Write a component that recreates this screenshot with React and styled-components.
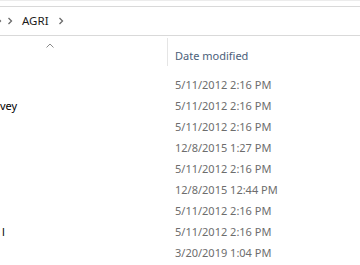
import React from "react";
import styled, { createGlobalStyle } from "styled-components";

const Global = createGlobalStyle`
  html, body { margin: 0; padding: 0; background: #fff; }
  body { font-family: "Noto Sans", "Segoe UI", sans-serif; font-size: 11px; overflow: hidden; }
`;

const Window = styled.div`
  width: 360px;
  height: 265px;
  border-top: 1px solid #ececec;
  box-sizing: border-box;
  overflow: hidden;
  background: #fff;
`;

const AddressBar = styled.div`
  margin-top: 5px;
  height: 28px;
  border-top: 1px solid #d9d9d9;
  border-bottom: 1px solid #d9d9d9;
  display: flex;
  align-items: center;
  overflow: hidden;
`;

const Crumb = styled.span`
  color: #1b1b1b;
  font-size: 11.5px;
  line-height: 16px;
  margin: 0 ${(p) => p.$gap}px;
`;

const ChevronBox = styled.span`
  display: inline-flex;
  width: 6px;
  height: 8px;
  margin-left: ${(p) => p.$ml}px;
`;

const Chevron = ({ ml }) => (
  <ChevronBox $ml={ml}>
    <svg width="6" height="8" viewBox="0 0 6 8">
      <path d="M1.5 1 L4.5 4 L1.5 7" fill="none" stroke="#6a6a6a" strokeWidth="1.3" />
    </svg>
  </ChevronBox>
);

const Header = styled.div`
  display: flex;
  height: 28px;
  margin-top: 2px;
`;

const NameHead = styled.div`
  width: 167px;
  display: flex;
  justify-content: flex-start;
  padding-left: 46px;
  padding-top: 5px;
  box-sizing: border-box;
`;

const DateHead = styled.div`
  border-left: 1px solid #e5e5e5;
  padding-left: 7px;
  padding-top: 10px;
  color: #4c607a;
  line-height: 16px;
`;

const Rows = styled.div`
  margin-top: 8px;
  display: flex;
  flex-direction: column;
`;

const Row = styled.div`
  display: flex;
  height: 21px;
  align-items: center;
`;

const NameCell = styled.div`
  width: 175px;
  flex: none;
  box-sizing: border-box;
  padding-left: ${(p) => p.$indent}px;
  color: #000;
  line-height: 16px;
  white-space: nowrap;
`;

const DateCell = styled.div`
  color: #6d6d6d;
  line-height: 16px;
  white-space: nowrap;
`;

const rows = [
  { d: "5/11/2012 2:16 PM" },
  { d: "5/11/2012 2:16 PM", name: "vey", indent: 0 },
  { d: "5/11/2012 2:16 PM" },
  { d: "12/8/2015 1:27 PM" },
  { d: "5/11/2012 2:16 PM" },
  { d: "12/8/2015 12:44 PM" },
  { d: "5/11/2012 2:16 PM" },
  { d: "5/11/2012 2:16 PM", name: "l", indent: 2 },
  { d: "3/20/2019 1:04 PM" },
];

export default function App() {
  return (
    <>
      <Global />
      <Window>
        <AddressBar>
          <Chevron ml={-4} />
          <Chevron ml={5} />
          <Crumb $gap={9}>AGRI</Crumb>
          <Chevron ml={0} />
        </AddressBar>
        <Header>
          <NameHead>
            <svg width="8" height="5" viewBox="0 0 8 5">
              <path d="M0.5 4.5 L4 1 L7.5 4.5" fill="none" stroke="#8a8a8a" strokeWidth="1" />
            </svg>
          </NameHead>
          <DateHead>Date modified</DateHead>
        </Header>
        <Rows>
          {rows.map((r, i) => (
            <Row key={i}>
              <NameCell $indent={r.indent || 0}>{r.name || ""}</NameCell>
              <DateCell>{r.d}</DateCell>
            </Row>
          ))}
        </Rows>
      </Window>
    </>
  );
}
